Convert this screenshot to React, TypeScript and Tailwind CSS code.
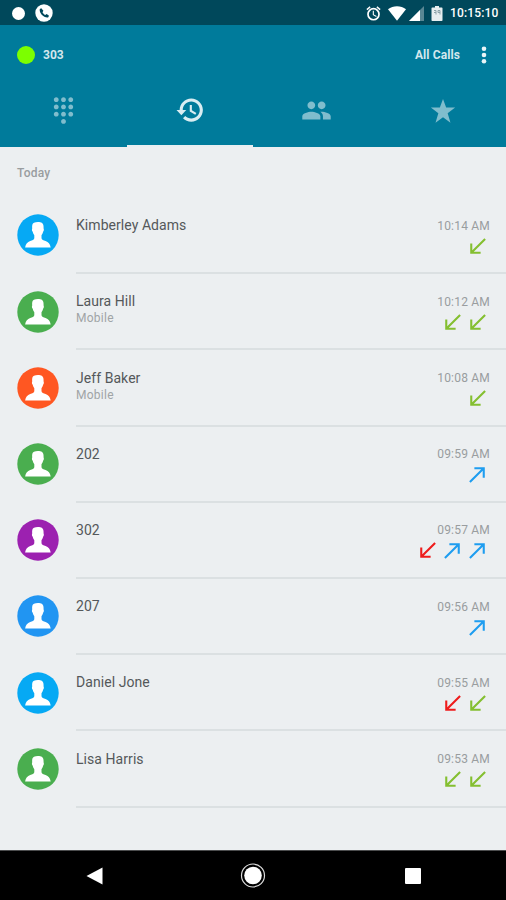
import React from "react";

type Arrow = "in" | "out" | "missed";
type Call = { name: string; label?: string; time: string; color: string; arrows: Arrow[] };

const calls: Call[] = [
  { name: "Kimberley Adams", time: "10:14 AM", color: "text-[#06a9f4]", arrows: ["in"] },
  { name: "Laura Hill", label: "Mobile", time: "10:12 AM", color: "text-[#4aae4f]", arrows: ["in", "in"] },
  { name: "Jeff Baker", label: "Mobile", time: "10:08 AM", color: "text-[#ff5722]", arrows: ["in"] },
  { name: "202", time: "09:59 AM", color: "text-[#4aae4f]", arrows: ["out"] },
  { name: "302", time: "09:57 AM", color: "text-[#9c21b0]", arrows: ["missed", "out", "out"] },
  { name: "207", time: "09:56 AM", color: "text-[#2195f2]", arrows: ["out"] },
  { name: "Daniel Jone", time: "09:55 AM", color: "text-[#06a9f4]", arrows: ["missed", "in"] },
  { name: "Lisa Harris", time: "09:53 AM", color: "text-[#4aae4f]", arrows: ["in", "in"] },
];

const arrowColor: Record<Arrow, string> = {
  in: "text-[#84bf30]",
  out: "text-[#1e9df0]",
  missed: "text-[#ee1c1c]",
};

function Icon({ d, className }: { d: string; className: string }) {
  return (
    <svg viewBox="0 0 24 24" fill="currentColor" className={className}>
      <path d={d} />
    </svg>
  );
}

function CallArrow({ kind }: { kind: Arrow }) {
  const d =
    kind === "out"
      ? "M9 5v2h6.59L4 18.59 5.41 20 17 8.41V15h2V5z"
      : "M20 5.41L18.59 4 7 15.59V9H5v10h10v-2H8.41z";
  return <Icon d={d} className={`h-[25px] w-[25px] ${arrowColor[kind]}`} />;
}

function Avatar({ color }: { color: string }) {
  return (
    <svg viewBox="0 0 42 42" className={`h-[42px] w-[42px] shrink-0 ${color}`}>
      <circle cx="21" cy="21" r="20.7" fill="currentColor" />
      <path
        fill="#fff"
        d="M17 8.700C19.500 7.800 23.300 7.800 25.100 9.100c1.300 1 1.500 2.700 1.500 5.400.5.800.3 2.400-.4 3.100-.3 1.600-.9 2.800-1.700 3.700v2.900c.3 1.400 1.900 2.100 4.100 2.900 2.800 1 4.400 2.700 5.100 6.500H8.100c.7-3.800 2.300-5.500 5.100-6.500 2.200-.8 3.800-1.500 4.100-2.900v-2.900c-.8-.9-1.400-2.100-1.700-3.700-.7-.7-.9-2.300-.4-3.100-.2-3 0-5 1.800-5.800z"
      />
    </svg>
  );
}

function StatusBar() {
  return (
    <div className="flex h-[25px] shrink-0 items-center bg-[#00485b] pt-px pl-[12px] pr-[7px] text-white">
      <span className="h-[13px] w-[13px] rounded-full bg-white" />
      <svg viewBox="0 0 18 18" className="ml-[10px] h-[18px] w-[18px]">
        <circle cx="9" cy="9" r="8.700" fill="#fff" />
        <path
          fill="#00485b"
          d="M6.300 4.300 4.800 5c-.9 4 4 9 8.300 8.400l.9-1.700-2.300-1.700-1.500 1c-1.200-.6-2.200-1.600-2.700-2.800l.9-1.500z"
        />
      </svg>
      <div className="ml-auto flex items-center">
        <Icon
          className="h-[17px] w-[17px]"
          d="M22 5.720l-4.600-3.860-1.290 1.530 4.600 3.860L22 5.720zM7.880 3.390L6.600 1.860 2 5.710l1.290 1.530 4.590-3.850zM12.500 8H11v6l4.750 2.850.75-1.230-4-2.370V8zM12 4a9 9 0 100 18 9 9 0 000-18zm0 15.600a6.600 6.600 0 110-13.200 6.600 6.600 0 010 13.200z"
        />
        <svg viewBox="0 0 18 15" className="ml-[6px] h-[15px] w-[18px]" fill="currentColor">
          <path d="M0 3.300C5-.7 13-.7 18 3.300L9 14.700z" />
        </svg>
        <svg viewBox="0 0 15 15" className="ml-[3px] h-[15px] w-[15px]" fill="currentColor">
          <path d="M15 0v15H0z" opacity=".35" />
          <path d="M11 4v11H0z" />
        </svg>
        <svg viewBox="0 0 12 15" className="ml-[7px] h-[15px] w-[12px]">
          <path fill="#e6eef0" d="M4 0h4v1.500h2.700q.8 0 .8.8v11.900q0 .8-.8.8H1.300q-.8 0-.8-.8V2.300q0-.8.8-.8H4z" />
          <path fill="none" stroke="#8ba2a9" strokeWidth="1" d="M3 4.500h2v4M3 6.500h2M7 4.500h2v4M7 4.500v2h2" />
        </svg>
        <span className="ml-[7px] w-[49px] whitespace-nowrap text-[12px] leading-[15px] font-medium tracking-[0.15px]">10:15:10</span>
      </div>
    </div>
  );
}

function Header() {
  return (
    <header className="flex h-[122px] shrink-0 flex-col bg-[#007b9b]">
      <div className="flex h-[59px] items-center pl-[17px] pr-[19px] text-[12px] font-bold text-[#d3e7ed]">
        <span className="h-[18px] w-[18px] rounded-full bg-[#7cff00]" />
        <span className="ml-[8px]">303</span>
        <span className="ml-auto tracking-[0.1px]">All Calls</span>
        <svg viewBox="0 0 6 20" className="ml-[21px] h-[20px] w-[6px]" fill="#e9f5f8">
          <circle cx="3" cy="3.700" r="2.300" />
          <circle cx="3" cy="10" r="2.300" />
          <circle cx="3" cy="16.300" r="2.300" />
        </svg>
      </div>
      <nav className="grid flex-1 grid-cols-4 text-[#80bdcd]">
        <div className="flex justify-center pt-[12px]">
          <Icon
            className="h-[29px] w-[29px]"
            d="M12 19c-1.100 0-2 .9-2 2s.9 2 2 2 2-.9 2-2-.9-2-2-2zM6 1c-1.100 0-2 .9-2 2s.9 2 2 2 2-.9 2-2-.9-2-2-2zm0 6c-1.100 0-2 .9-2 2s.9 2 2 2 2-.9 2-2-.9-2-2-2zm0 6c-1.100 0-2 .9-2 2s.9 2 2 2 2-.9 2-2-.9-2-2-2zm12-8c1.100 0 2-.9 2-2s-.9-2-2-2-2 .9-2 2 .9 2 2 2zm-6 8c-1.100 0-2 .9-2 2s.9 2 2 2 2-.9 2-2-.9-2-2-2zm6 0c-1.100 0-2 .9-2 2s.9 2 2 2 2-.9 2-2-.9-2-2-2zm0-6c-1.100 0-2 .9-2 2s.9 2 2 2 2-.9 2-2-.9-2-2-2zm-6 0c-1.100 0-2 .9-2 2s.9 2 2 2 2-.9 2-2-.9-2-2-2zm0-6c-1.100 0-2 .9-2 2s.9 2 2 2 2-.9 2-2-.9-2-2-2z"
          />
        </div>
        <div className="flex justify-center border-b-[2px] border-[#e8eef1] pt-[11px] text-[#d9edf2]">
          <Icon
            className="h-[30px] w-[30px]"
            d="M13 2.700c-5.100 0-9.200 4.100-9.300 9.300H1.200l3.900 4.200L9 12H6.200c0-3.800 3-6.800 6.800-6.800s6.800 3 6.800 6.800-3 6.800-6.800 6.800c-1.900 0-3.600-.8-4.800-2l-1.800 1.800c1.700 1.700 4 2.700 6.600 2.700 5.100 0 9.300-4.200 9.300-9.300S18.100 2.700 13 2.700zM11.800 8v5.200l4.400 2.600.9-1.500-3.600-2.100V8z"
          />
        </div>
        <div className="flex justify-center pt-[11px]">
          <Icon
            className="h-[31px] w-[31px]"
            d="M16 11c1.660 0 2.990-1.340 2.990-3S17.660 5 16 5c-1.660 0-3 1.340-3 3s1.340 3 3 3zm-8 0c1.660 0 2.990-1.340 2.990-3S9.660 5 8 5C6.340 5 5 6.340 5 8s1.340 3 3 3zm0 2c-2.330 0-7 1.170-7 3.500V19h14v-2.500c0-2.330-4.670-3.500-7-3.500zm8 0c-.29 0-.62.02-.97.05 1.160.84 1.970 1.970 1.970 3.450V19h6v-2.500c0-2.330-4.670-3.500-7-3.500z"
          />
        </div>
        <div className="flex justify-center pt-[13.500px] pl-[1px]">
          <Icon
            className="h-[26px] w-[26px]"
            d="M12 .9l2.900 7.900h8.300l-6.900 5.300 2.600 8.700L12 17.700l-6.900 5.100 2.600-8.700L.8 8.800h8.300z"
          />
        </div>
      </nav>
    </header>
  );
}

function CallRow({ call }: { call: Call }) {
  return (
    <li className="flex h-[76.2px] pl-[17px]">
      <div className="pt-[16.400px]">
        <Avatar color={call.color} />
      </div>
      <div className="ml-[17px] flex flex-1 justify-between border-b-2 border-[#dbe0e2] pr-[16px]">
        <div className="pt-[17.300px]">
          <div className="text-[14px] leading-[20px] tracking-[0.06px] text-[#54585a]">{call.name}</div>
          {call.label && (
            <div className="text-[12px] leading-[15px] tracking-[0.25px] text-[#a0a4a6]">{call.label}</div>
          )}
        </div>
        <div className="flex flex-col items-end pt-[19.700px]">
          <div className="text-[12px] leading-[16px] tracking-[0.2px] text-[#999d9f]">{call.time}</div>
          <div className="flex">
            {call.arrows.map((kind, i) => (
              <CallArrow key={i} kind={kind} />
            ))}
          </div>
        </div>
      </div>
    </li>
  );
}

function NavBar() {
  return (
    <footer className="flex h-[50px] shrink-0 items-center justify-between border-t border-[#4c4d4e] bg-black pl-[86px] pr-[85px]">
      <svg viewBox="0 0 18 18" className="h-[18px] w-[18px]" fill="#fff">
        <path d="M16.500 .5v17L.5 9z" />
      </svg>
      <svg viewBox="0 0 26 26" className="-ml-[3px] h-[26px] w-[26px]">
        <circle cx="13" cy="12.500" r="11.500" fill="none" stroke="#ddd" strokeWidth="1.200" />
        <circle cx="13" cy="12.500" r="8.800" fill="#fff" />
      </svg>
      <span className="h-[16px] w-[16px] rounded-[1px] bg-white" />
    </footer>
  );
}

export default function App() {
  return (
    <div className="flex h-[900px] w-[506px] flex-col overflow-hidden bg-[#eceff1] font-[Roboto,sans-serif]">
      <StatusBar />
      <Header />
      <main className="flex-1">
        <h2 className="h-[51px] pt-[18px] pl-[17px] text-[12px] leading-[16px] font-medium tracking-[0.2px] text-[#999d9f]">
          Today
        </h2>
        <ul>
          {calls.map((call) => (
            <CallRow key={call.name} call={call} />
          ))}
        </ul>
      </main>
      <NavBar />
    </div>
  );
}
